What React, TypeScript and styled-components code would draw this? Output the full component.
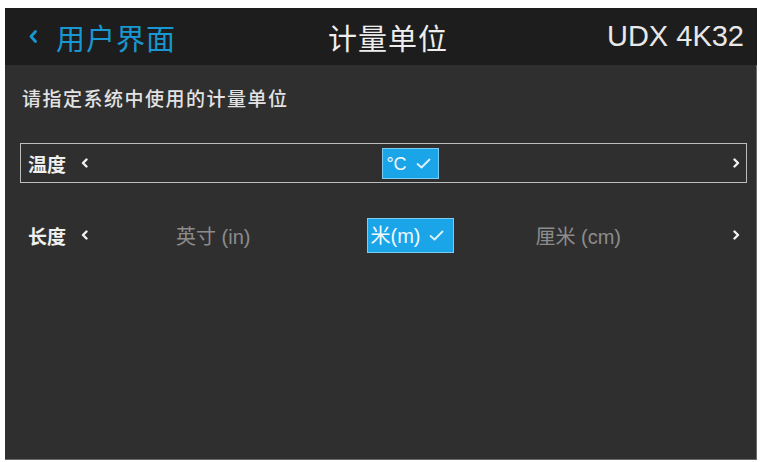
import React from "react";
import styled, { createGlobalStyle } from "styled-components";

const GlobalStyle = createGlobalStyle`
  html, body {
    margin: 0;
    padding: 0;
    background: #ffffff;
  }
  body {
    font-family: "Liberation Sans", "Noto Sans CJK SC", sans-serif;
  }
`;

const FONT = `"Liberation Sans", "Noto Sans CJK SC", sans-serif`;

const Screen = styled.div`
  margin: 8px 5px 0 5px;
  width: 752px;
  height: 452px;
  background: #2f2f2f;
  display: flex;
  flex-direction: column;
  box-shadow: inset -1px 0 0 #6a6a6a, inset 0 -1px 0 #6a6a6a;
  overflow: hidden;
`;

const Header = styled.header`
  height: 57px;
  flex: none;
  background: #1d1d1d;
  display: grid;
  grid-template-columns: 1fr auto 1fr;
  align-items: center;
  padding: 0 13px 0 23px;
  font-family: ${FONT};
`;

const BackLink = styled.div`
  display: flex;
  align-items: center;
  gap: 18px;
  color: #1897d2;
  font-size: 29px;
  letter-spacing: 1px;
`;

const Title = styled.div`
  color: #eeeeee;
  font-size: 29px;
  letter-spacing: 1px;
  text-align: center;
  padding-left: 4px;
`;

const Model = styled.div`
  justify-self: end;
  color: #e8e8e8;
  font-size: 29px;
`;

const Content = styled.main`
  display: flex;
  flex-direction: column;
  padding: 23px 10px 0 15px;
  font-family: ${FONT};
`;

const Prompt = styled.div`
  color: #e2e2e2;
  font-size: 19px;
  line-height: 24px;
  letter-spacing: 1.5px;
  font-weight: 500;
  padding-left: 2px;
  margin-bottom: 31px;
`;

const Row = styled.div<{ $focused?: boolean }>`
  height: 40px;
  box-sizing: border-box;
  display: grid;
  grid-template-columns: 40px 20px 1fr 14px;
  align-items: center;
  padding: 0 6px 0 7px;
  border: 1.5px solid ${(p) => (p.$focused ? "#bdbdbd" : "transparent")};
  & + & {
    margin-top: 32px;
  }
`;

const Label = styled.div`
  color: #f0f0f0;
  font-size: 19px;
  font-weight: 700;
  white-space: nowrap;
`;

const Arrow = styled.svg`
  width: 7px;
  height: 10px;
  justify-self: end;
`;

const Track = styled.div`
  display: grid;
  grid-template-columns: 1fr auto 1fr;
  align-items: center;
  margin-left: 7px;
`;

const Option = styled.div<{ $side: "left" | "right" }>`
  color: #8c8c8c;
  font-size: 20px;
  white-space: nowrap;
  justify-self: ${(p) => (p.$side === "left" ? "end" : "start")};
  margin-right: ${(p) => (p.$side === "left" ? "116px" : "0")};
  margin-left: ${(p) => (p.$side === "right" ? "81px" : "0")};
`;

const Chip = styled.div<{ $large?: boolean }>`
  grid-column: 2;
  display: flex;
  align-items: center;
  gap: 9px;
  box-sizing: border-box;
  height: ${(p) => (p.$large ? "35px" : "31px")};
  line-height: 1;
  padding: 1px ${(p) => (p.$large ? "9px" : "7px")} 0 3px;
  background: #19a5e8;
  border: 1.5px solid #7ccbf0;
  color: #f4fbff;
  font-size: ${(p) => (p.$large ? "20px" : "18px")};
  white-space: nowrap;
`;

const Check = styled.svg`
  width: 15px;
  height: 11px;
`;

const Chevron = ({ side, color = "#f2f2f2" }: { side: "left" | "right"; color?: string }) => (
  <Arrow viewBox="0 0 7 10">
    <polyline
      points={side === "left" ? "5.5,1.5 2,5 5.5,8.5" : "1.5,1.5 5,5 1.5,8.5"}
      fill="none"
      stroke={color}
      strokeWidth="2.4"
      strokeLinecap="round"
      strokeLinejoin="round"
    />
  </Arrow>
);

const Tick = () => (
  <Check viewBox="0 0 15 11">
    <polyline
      points="1.5,6 5.5,9.5 13.5,1.5"
      fill="none"
      stroke="#dff3ff"
      strokeWidth="1.8"
      strokeLinecap="round"
      strokeLinejoin="round"
    />
  </Check>
);

const BackIcon = styled.svg`
  width: 10px;
  height: 15px;
`;

export default function App() {
  return (
    <>
      <GlobalStyle />
      <Screen>
        <Header>
          <BackLink>
            <BackIcon viewBox="0 0 10 15">
              <polyline
                points="7.5,2.5 3,7.5 7.5,12.5"
                fill="none"
                stroke="#1897d2"
                strokeWidth="2.8"
                strokeLinecap="round"
                strokeLinejoin="round"
              />
            </BackIcon>
            <span>用户界面</span>
          </BackLink>
          <Title>计量单位</Title>
          <Model>UDX 4K32</Model>
        </Header>
        <Content>
          <Prompt>请指定系统中使用的计量单位</Prompt>
          <Row $focused>
            <Label>温度</Label>
            <Chevron side="left" />
            <Track>
              <Chip>
                <span>°C</span>
                <Tick />
              </Chip>
            </Track>
            <Chevron side="right" />
          </Row>
          <Row>
            <Label>长度</Label>
            <Chevron side="left" />
            <Track>
              <Option $side="left">英寸 (in)</Option>
              <Chip $large>
                <span>米(m)</span>
                <Tick />
              </Chip>
              <Option $side="right">厘米 (cm)</Option>
            </Track>
            <Chevron side="right" />
          </Row>
        </Content>
      </Screen>
    </>
  );
}
